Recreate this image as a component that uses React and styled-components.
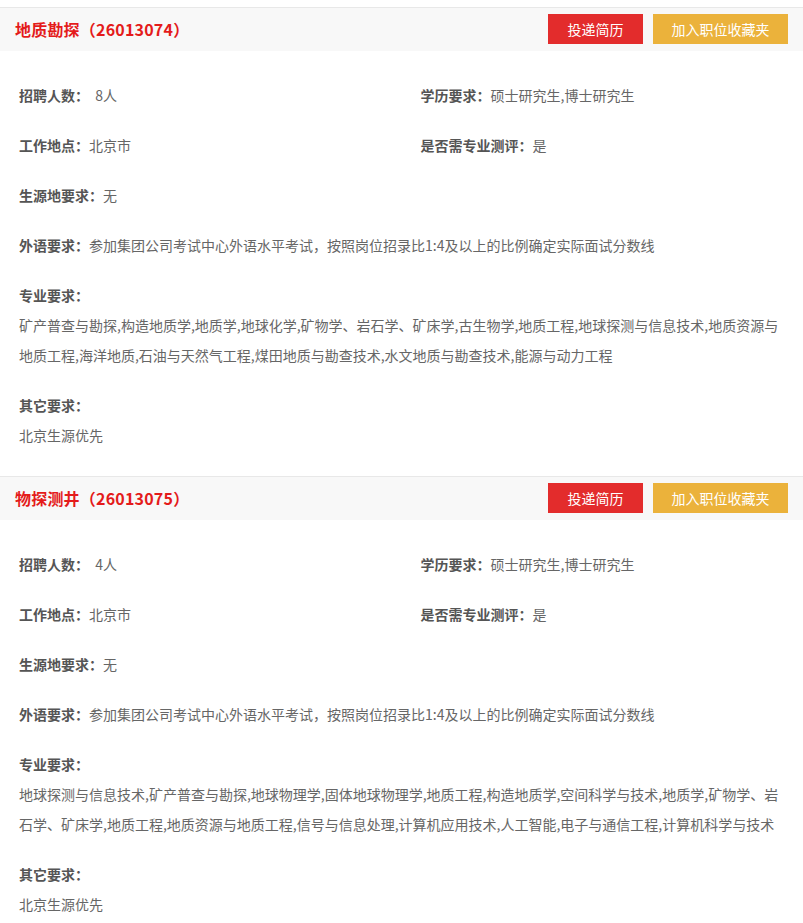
import React from 'react';
import styled, { createGlobalStyle } from 'styled-components';

const GlobalStyle = createGlobalStyle`
  body {
    margin: 0;
    background: #fff;
    font-family: "Noto Sans CJK SC", "Liberation Sans", sans-serif;
  }
`;

// 职位数据
const jobs = [
  {
    name: '地质勘探',
    code: '26013074',
    count: '8人',
    edu: '硕士研究生,博士研究生',
    place: '北京市',
    test: '是',
    origin: '无',
    lang: '参加集团公司考试中心外语水平考试，按照岗位招录比1:4及以上的比例确定实际面试分数线',
    majors: '矿产普查与勘探,构造地质学,地质学,地球化学,矿物学、岩石学、矿床学,古生物学,地质工程,地球探测与信息技术,地质资源与地质工程,海洋地质,石油与天然气工程,煤田地质与勘查技术,水文地质与勘查技术,能源与动力工程',
    other: '北京生源优先',
  },
  {
    name: '物探测井',
    code: '26013075',
    count: '4人',
    edu: '硕士研究生,博士研究生',
    place: '北京市',
    test: '是',
    origin: '无',
    lang: '参加集团公司考试中心外语水平考试，按照岗位招录比1:4及以上的比例确定实际面试分数线',
    majors: '地球探测与信息技术,矿产普查与勘探,地球物理学,固体地球物理学,地质工程,构造地质学,空间科学与技术,地质学,矿物学、岩石学、矿床学,地质工程,地质资源与地质工程,信号与信息处理,计算机应用技术,人工智能,电子与通信工程,计算机科学与技术',
    other: '北京生源优先',
  },
];

const JobItem = ({ job }) => (
  <Section>
    <Header>
      <Title>{job.name}（{job.code}）</Title>
      <Actions>
        <Button kind="apply">投递简历</Button>
        <Button kind="fav">加入职位收藏夹</Button>
      </Actions>
    </Header>
    <Body>
      <Field>
        <Label>招聘人数：</Label>
        <Value>&nbsp;&nbsp;{job.count}</Value>
      </Field>
      <Field>
        <Label>学历要求：</Label>
        <Value>{job.edu}</Value>
      </Field>
      <Field>
        <Label>工作地点：</Label>
        <Value>{job.place}</Value>
      </Field>
      <Field>
        <Label>是否需专业测评：</Label>
        <Value>{job.test}</Value>
      </Field>
      <Field full>
        <Label>生源地要求：</Label>
        <Value>{job.origin}</Value>
      </Field>
      <Field full>
        <Label>外语要求：</Label>
        <Value>{job.lang}</Value>
      </Field>
      <Field full>
        <Label>专业要求：</Label>
        <Block>{job.majors}</Block>
      </Field>
      <Field full>
        <Label>其它要求：</Label>
        <Block>{job.other}</Block>
      </Field>
    </Body>
  </Section>
);

export default function App() {
  return (
    <Page>
      <GlobalStyle />
      {jobs.map((job) => (
        <JobItem key={job.code} job={job} />
      ))}
    </Page>
  );
}

const Page = styled.div`
  padding-top: 7px;
  width: 803px;
`;

const Section = styled.div``;

const Header = styled.div`
  display: flex;
  align-items: center;
  justify-content: space-between;
  height: 43px;
  padding: 0 15px;
  background: #f8f8f8;
  border-top: 1px solid #e8e8e8;
`;

const Title = styled.h3`
  margin: 0 0 1px;
  font-size: 16px;
  font-weight: 700;
  letter-spacing: 0.2px;
  color: #e41b1b;
`;

const Actions = styled.div`
  display: flex;
  gap: 10px;
  margin-bottom: 1px;
`;

const Button = styled.button`
  width: ${(props) => (props.kind === 'apply' ? '95px' : '135px')};
  height: 30px;
  padding: 0;
  border: 0;
  border-radius: 0;
  font-family: inherit;
  font-size: 14px;
  color: #fff;
  cursor: pointer;
  background: ${(props) => (props.kind === 'apply' ? '#e32c2c' : '#ebb23b')};
`;

const Body = styled.div`
  display: flex;
  flex-wrap: wrap;
  row-gap: 20px;
  padding: 29px 0 26px;
`;

const Field = styled.div`
  box-sizing: border-box;
  width: ${(props) => (props.full ? '100%' : '50%')};
  padding: 0 19px;
  font-size: 14px;
  line-height: 30px;
`;

const Label = styled.span`
  font-weight: 700;
  color: #555;
`;

const Value = styled.span`
  color: #666;
`;

const Block = styled.div`
  color: #666;
  line-height: 30px;
`;
